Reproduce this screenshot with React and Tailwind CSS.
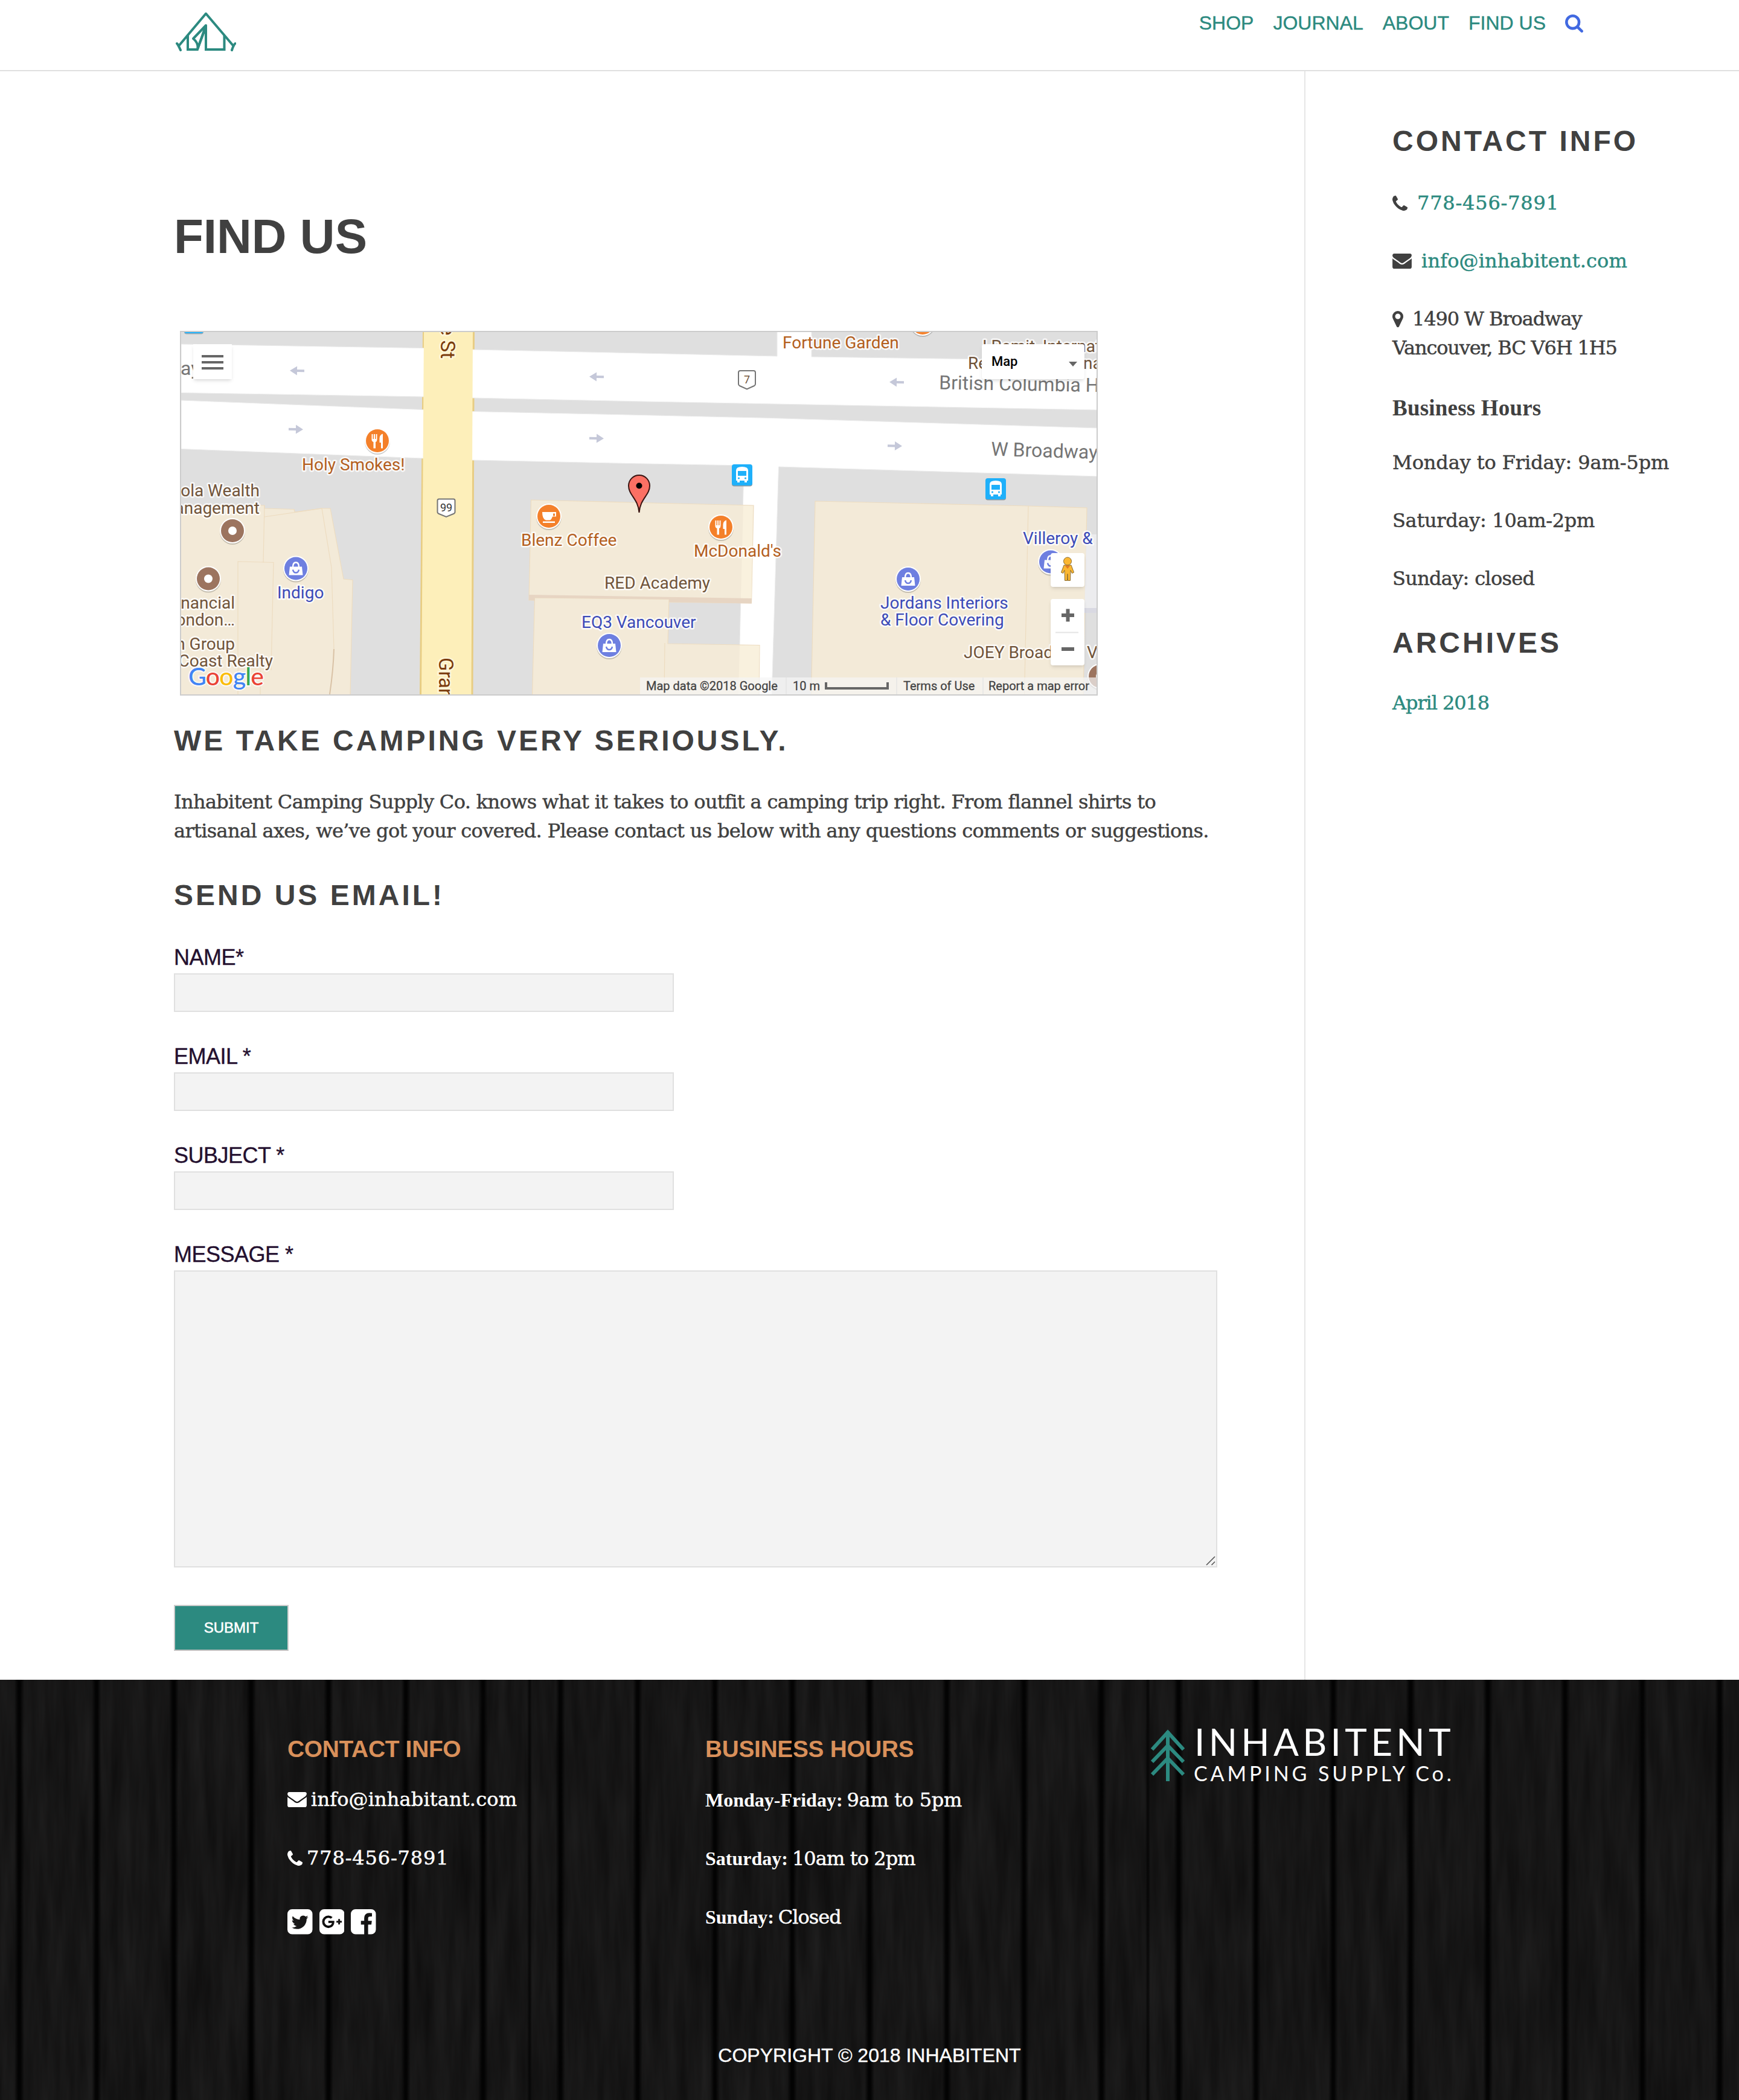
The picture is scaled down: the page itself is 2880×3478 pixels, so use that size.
import React from "react";

const ICONS = {
  search: {
    box: "64 128 1664 1664",
    d: "M1216 832q0-185-131.5-316.5t-316.5-131.5-316.5 131.5-131.5 316.5 131.5 316.5 316.5 131.5 316.5-131.5 131.5-316.5zm512 832q0 52-38 90t-90 38q-54 0-90-38l-343-342q-179 124-399 124-143 0-273.5-55.5t-225-150-150-225-55.5-273.5 55.5-273.5 150-225 225-150 273.5-55.5 273.5 55.5 225 150 150 225 55.5 273.5q0 220-124 399l343 343q37 37 37 90z",
  },
  phone: {
    box: "192 128 1408 1408",
    d: "M1600 1240q0 27-10 70.5t-21 68.5q-21 50-122 106-94 51-186 51-27 0-52.5-3.5t-57.5-12.5-47.5-14.5-55.5-20.5-49-18q-98-35-175-83-128-79-264.5-215.5t-215.5-264.5q-48-77-83-175-3-9-18-49t-20.5-55.5-14.5-47.5-12.5-57.5-3.5-52.5q0-92 51-186 56-101 106-122 25-11 68.5-21t70.5-10q14 0 21 3 18 6 53 76 11 19 30 54t35 63.5 31 53.5q3 4 17.5 25t21.5 35.5 7 28.5q0 20-28.5 50t-62 55-62 53-28.5 46q0 9 5 22.5t8.5 20.5 14 24 11.5 19q76 137 174 235t235 174q2 1 19 11.5t24 14 20.5 8.5 22.5 5q18 0 46-28.5t53-62 55-62 50-28.5q14 0 28.5 7t35.5 21.5 25 17.5q25 15 53.5 31t63.5 35 54 30q70 35 76 53 3 7 3 21z",
  },
  envelope: {
    box: "0 256 1792 1408",
    d: "M1792 710v794q0 66-47 113t-113 47h-1472q-66 0-113-47t-47-113v-794q44 49 101 87 362 246 497 345 57 42 92.5 65.5t94.5 48 110 24.5h2q51 0 110-24.5t94.5-48 92.5-65.5q170-123 498-345 57-39 100-87zm0-294q0 79-49 151t-122 123q-376 261-468 325-10 7-42.5 31t-54 38.5-52 32.5-57.5 27-50 9h-2q-23 0-50-9t-57.5-27-52-32.5-54-38.5-42.5-31q-91-64-262-182.5t-205-142.5q-62-42-117-115.5t-55-136.5q0-78 41.5-130t118.5-52h1472q65 0 112.5 47t47.5 113z",
  },
  marker: {
    box: "384 128 1024 1536",
    d: "M1152 640q0-106-75-181t-181-75-181 75-75 181 75 181 181 75 181-75 75-181zm256 0q0 109-33 179l-364 774q-16 33-47.5 52t-67.5 19-67.5-19-46.5-52l-365-774q-33-70-33-179 0-212 150-362t362-150 362 150 150 362z",
  },
  twitter: {
    box: "128 128 1536 1536",
    d: "M1408 610q-56 25-121 34 68-40 93-117-65 38-134 51-61-66-153-66-87 0-148.5 61.5t-61.5 148.5q0 29 5 48-129-7-242-65t-192-155q-29 50-29 106 0 114 91 175-47-1-100-26v2q0 75 50 133.5t123 72.5q-29 8-51 8-13 0-39-4 21 63 74.5 104t121.5 42q-116 90-261 90-26 0-50-3 148 94 322 94 112 0 210-35.5t168-95 120.5-137 75-162 24.5-168.5q0-18-1-27 63-45 105-109zm256-194v960q0 119-84.5 203.5t-203.5 84.5h-960q-119 0-203.5-84.5t-84.5-203.5v-960q0-119 84.5-203.5t203.5-84.5h960q119 0 203.5 84.5t84.5 203.5z",
  },
  google: {
    box: "128 128 1536 1536",
    d: "M1045 905q0-26-6-64h-362v132h217q-3 24-16.5 50t-37.5 53-66.5 44.5-96.5 17.5q-99 0-169-71t-70-171 70-171 169-71q92 0 153 59l104-101q-108-100-257-100-160 0-272 112.5t-112 271.5 112 271.5 272 112.5q165 0 266.5-105t101.5-270zm345 46h109v-110h-109v-110h-110v110h-110v110h110v110h110v-110zm274-535v960q0 119-84.5 203.5t-203.5 84.5h-960q-119 0-203.5-84.5t-84.5-203.5v-960q0-119 84.5-203.5t203.5-84.5h960q119 0 203.5 84.5t84.5 203.5z",
  },
  facebook: {
    box: "128 128 1536 1536",
    d: "M1376 128q119 0 203.5 84.5t84.5 203.5v960q0 119-84.5 203.5t-203.5 84.5h-188v-595h199l30-232h-229v-148q0-56 23.5-84t91.5-28l122-1v-207q-63-9-178-9-136 0-217.5 80t-81.5 226v171h-200v232h200v595h-532q-119 0-203.5-84.5t-84.5-203.5v-960q0-119 84.5-203.5t203.5-84.5h960z",
  },
};

function Icon({ name, className }) {
  const icon = ICONS[name];
  return (
    <svg viewBox={icon.box} className={className} fill="currentColor" aria-hidden="true">
      <path fillRule="evenodd" d={icon.d} />
    </svg>
  );
}

function TentLogo() {
  return (
    <svg viewBox="291 20 100 65" className="h-[65px] w-[100px]" fill="none" stroke="#2c8a80" strokeWidth="4">
      <g strokeLinecap="round" strokeLinejoin="round">
        <path d="M296 76 L341 22.500 L386.500 76" />
        <path d="M293 72 Q295 74 299 83" />
        <path d="M389.500 72 Q387 74 384 83" />
        <path d="M341 42 L320 64 Q328 70 327.500 80 L341 44" />
      </g>
      <path d="M311 59 V82 H327 L341 42" />
      <path d="M341 42 V82 H371.500 V59" />
    </svg>
  );
}

function Header() {
  return (
    <header className="flex h-[118px] items-start justify-between border-b-2 border-[#e0e0e0] pl-[291px] pr-[258px]">
      <div className="pt-5">
        <TentLogo />
      </div>
      <nav className="flex items-center gap-8 pt-[15px] text-[32px] leading-[48px] text-[#2c8a80]">
        <div className="-mt-px flex gap-8 [-webkit-text-stroke:0.4px]">
          <a>SHOP</a>
          <a>JOURNAL</a>
          <a>ABOUT</a>
          <a>FIND US</a>
        </div>
        <Icon name="search" className="h-[30px] w-[30px] text-[#4169e1]" />
      </nav>
    </header>
  );
}

const POI_LABELS = [
  [1296, 577, "Fortune Garden", "#b45f1e"],
  [500, 778.5, "Holy Smokes!", "#b45f1e"],
  [863, 903.5, "Blenz Coffee", "#b45f1e"],
  [1149, 922, "McDonald's", "#b45f1e"],
  [1001, 974.5, "RED Academy", "#71543a"],
  [963, 1039.5, "EQ3 Vancouver", "#3c4bb8"],
  [459, 991, "Indigo", "#3c4bb8"],
  [1458, 1007.5, "Jordans Interiors", "#3c4bb8"],
  [1458, 1036, "& Floor Covering", "#3c4bb8"],
  [1694, 900.5, "Villeroy &", "#3c4bb8"],
  [1596, 1090, "JOEY Broad", "#71543a"],
  [1800, 1090, "Van", "#71543a"],
  [1627, 583, "I Remit, Internat", "#71543a"],
  [1603, 611, "Re", "#71543a"],
  [1794, 611, "na", "#71543a"],
];

const EDGE_LABELS = [
  [430, 822, "ola Wealth"],
  [430, 850.5, "anagement"],
  [389, 1007.5, "nancial"],
  [389, 1036, "ondon…"],
  [389, 1075.5, "n Group"],
  [452, 1103.5, "Coast Realty"],
];

function Dot({ x, y, color, children }) {
  return (
    <g transform={`translate(${x} ${y})`}>
      <circle cy="2" r="21" fill="#00000030" />
      <circle r="21" fill="#fff" />
      <circle r="19" fill={color} />
      {children}
    </g>
  );
}

const Fork = () => (
  <g fill="#fff">
    <path d="M-9.500-11h2v8h1.500v-8h2v8h1.500v-8h2v9q0 3-2.500 4v10.500h-3.500V2q-3-1-3-4z" />
    <path d="M9-11.500v24h-3V3h-2.500v-7q0-6 5.500-7.500z" />
  </g>
);
const Cup = () => (
  <g>
    <path d="M-11-7h23v7.500h-6q-2 6-5 6h-6q-6-2-6-13.500z" fill="#fff" />
    <rect x="7" y="-4.500" width="3" height="4" fill="#f4802a" />
    <rect x="-10" y="8.500" width="20" height="2.500" fill="#fff" />
  </g>
);
const Bag = () => (
  <g>
    <path d="M-10-3h20l1.500 14h-23z" fill="#fff" />
    <path d="M-5-2q0-8 5-8t5 8" fill="none" stroke="#fff" strokeWidth="2.500" />
    <path d="M-5 2q1 5 5 5t5-5" fill="none" stroke="#6e7fe0" strokeWidth="2.500" />
  </g>
);
const Hole = () => <circle r="7" fill="#fff" />;

function Bus({ x, y }) {
  return (
    <g transform={`translate(${x} ${y})`}>
      <rect y="1.500" width="34" height="35" rx="4" fill="#8b9aa3" />
      <rect width="34" height="35" rx="4" fill="#1fb0fa" />
      <path d="M7 27V10q0-6 10-6t10 6v17h-2v3h-4v-3h-8v3h-4v-3z" fill="#fff" />
      <rect x="10" y="11" width="14" height="8" fill="#1fb0fa" />
      <circle cx="11.500" cy="23" r="1.600" fill="#1fb0fa" />
      <circle cx="22.500" cy="23" r="1.600" fill="#1fb0fa" />
    </g>
  );
}

function Arrow({ x, y, flip }) {
  return (
    <path
      transform={`translate(${x} ${y}) rotate(${flip ? 181 : 1})`}
      d="M-12-2H0V-7.500L12 0 0 7.500V2H-12z"
      fill="#c5c8d9"
    />
  );
}

function MapDrawing() {
  return (
    <svg viewBox="300 550 1516 600" className="block h-[600px] w-[1516px]" fontFamily="Roboto, sans-serif">
      <rect x="300" y="550" width="1516" height="600" fill="#dfdfdf" />
      {/* avenue kerbs */}
      <path d="M700 550H786L783.500 1150H695z" fill="#e8cd83" />
      {/* streets */}
      <g fill="#fff" stroke="#ececec" strokeWidth="1">
        <path d="M300 570 700 576.500 782 579 1040 584.500 1287 590V540H1344V591L1601 594.500 1820 600V679L1040 664.500 782 659 700 657 300 650.500z" />
        <path d="M300 663 700 678.500 782 681.500 1040 687 1280 692.500 1820 709V789L1289.500 773 1278 1155H1223L1232 771 1040 767.500 782 762 700 759 300 743.500z" />
      </g>
      <path d="M702 550H783L780.500 1150H698z" fill="#fdefba" />
      {/* buildings */}
      <g fill="#f3ead8" stroke="#eddcc0" strokeWidth="1.200">
        <path d="M298 837H438V842L487 843.500 488 848 533 842H547L569 959 584 960.500 580 1152H298z" />
        <path d="M438 837 436 932M394 1152V930L453 931.500 449 1110M394 1108H449M431 1110V1152M438 856 533 842 549 940 553 1075" fill="none" />
        <path d="M553 1075Q552 1110 546 1150" fill="none" stroke="#d9c2a6" strokeWidth="2" />
        <path d="M879.500 828 1040 832 1248 837 1244.500 999 876 994z" />
        <path d="M885.500 990 1108 992.500 1106 1066 1258 1068.500 1257 1152H881.500z" />
        <path d="M1101 1065 1100 1152" />
        <path d="M1350 830 1703 838 1800 841 1794 1152H1343.500z" />
        <path d="M1703 838 1696.500 1152" />
      </g>
      <path d="M1231 837.500 1247 838 1244.500 991H1227z M1225 1069H1257.500L1256.500 1150H1223z" fill="#f9f1de" />
      <path d="M876 985 1245 991 1244.500 999.500 1108 997V992.500L885.500 990V994.500L876 994z" fill="#e7d5c3" />
      <path d="M1799 885H1816V1007H1796z" fill="#ececee" />
      <path d="M1796 1007H1816V1015H1796z" fill="#d9d9e2" />

      <Arrow x={492} y={614} flip />
      <Arrow x={988} y={624} flip />
      <Arrow x={1485} y={633} flip />
      <Arrow x={490} y={711} />
      <Arrow x={988} y={726} />
      <Arrow x={1482} y={738.5} />

      {/* street names */}
      <g fontSize="32" fill="#757575">
        <text x="299" y="620.500">ay</text>
        <text transform="translate(1555 644.500) rotate(1)">British Columbia H</text>
        <text transform="translate(1641 754.500) rotate(1.800)">W Broadway</text>
      </g>
      <g fontSize="33" fill="#7a3c0c" stroke="#fff6d8" strokeWidth="5" paintOrder="stroke">
        <text transform="translate(730 594) rotate(90)" textAnchor="end">e St</text>
        <text transform="translate(727 1089) rotate(90)">Gran</text>
      </g>

      {/* route shields */}
      <g fill="#fff" stroke="#757575" strokeWidth="2" textAnchor="middle">
        <path d="M727 826.500H751Q753.500 826.500 753.500 829V848Q753.500 850 751 851L739 856 727 851Q724.500 850 724.500 848V829Q724.500 826.500 727 826.500z" />
        <path d="M1226 614H1248Q1251 614 1251 617V636Q1251 638 1249 639L1237 644.500 1225 639Q1223 638 1223 636V617Q1223 614 1226 614z" />
        <text x="739" y="847" fontSize="18" fill="#333" stroke="none">99</text>
        <text x="1237" y="635" fontSize="18" fill="#71543a" stroke="none">7</text>
      </g>

      <rect x="305" y="520" width="32" height="33.500" rx="4" fill="#a5abaf" />
      <rect x="305" y="520" width="32" height="32" rx="4" fill="#1fb0fa" />
      <Bus x={1212} y={769} />
      <Bus x={1632} y={792} />
      <Dot x={1528} y={535} color="#f4802a" />
      <Dot x={625} y={730} color="#f4802a"><Fork /></Dot>
      <Dot x={909} y={855} color="#f4802a"><Cup /></Dot>
      <Dot x={1194} y={873} color="#f4802a"><Fork /></Dot>
      <Dot x={385} y={879} color="#9c745f"><Hole /></Dot>
      <Dot x={345} y={958.5} color="#9c745f"><Hole /></Dot>
      <Dot x={1822} y={1120} color="#9c745f"><Hole /></Dot>
      <Dot x={490} y={941.5} color="#6e7fe0"><Bag /></Dot>
      <Dot x={1009} y={1069} color="#6e7fe0"><Bag /></Dot>
      <Dot x={1504} y={959} color="#6e7fe0"><Bag /></Dot>
      <Dot x={1740} y={930.5} color="#6e7fe0"><Bag /></Dot>

      <g fontSize="28" stroke="#ffffffcc" strokeWidth="5" strokeLinejoin="round" paintOrder="stroke">
        {POI_LABELS.map(([x, y, label, color]) => (
          <text key={label} x={x} y={y} fill={color}>{label}</text>
        ))}
        {EDGE_LABELS.map(([x, y, label]) => (
          <text key={label} x={x} y={y} fill="#71543a" textAnchor="end">{label}</text>
        ))}
      </g>

      {/* location pin */}
      <path
        d="M1058.500 849C1057 826 1041 820 1041 804.500A17.500 17.500 0 0 1 1076 804.500C1076 820 1060 826 1058.500 849z"
        fill="#fb7064"
        stroke="#3a1512"
        strokeWidth="2"
      />
      <circle cx="1058.500" cy="804.500" r="5" fill="#000" />

      <text
        x="312"
        y="1135"
        fontFamily="Lato, sans-serif"
        fontSize="41"
        fontWeight="500"
        textLength="125"
        stroke="#ffffffcc"
        strokeWidth="4"
        paintOrder="stroke"
      >
        <tspan fill="#4285f4">G</tspan>
        <tspan fill="#ea4335">o</tspan>
        <tspan fill="#fbbc05">o</tspan>
        <tspan fill="#4285f4">g</tspan>
        <tspan fill="#34a853">l</tspan>
        <tspan fill="#ea4335">e</tspan>
      </text>
    </svg>
  );
}

function Pegman() {
  return (
    <svg viewBox="0 0 24 40" className="h-[40px] w-[24px]" stroke="#8a6a2c" strokeWidth="1">
      <path d="M6 14h12l4.500 12-3 1.500-2.500-5-.5 17h-4l-.5-11-.5 11h-4L7 22.500l-2.500 5-3-1.500z" fill="#fbb732" />
      <path d="M7.500 14.500h9L12 20z" fill="#e27b26" stroke="none" />
      <circle cx="12" cy="7.500" r="6.500" fill="#fbb732" />
    </svg>
  );
}

function MapPanel() {
  return (
    <div className="relative ml-[10px] mt-[108px] h-[604px] w-[1520px] overflow-hidden border-2 border-[#ccc]">
      <MapDrawing />
      <div className="absolute left-[20px] top-[20px] flex h-[58px] w-[64px] flex-col items-center justify-center gap-[6px] bg-white pt-px shadow-md">
        <span className="h-1 w-9 bg-[#666]" />
        <span className="h-1 w-9 bg-[#666]" />
        <span className="h-1 w-9 bg-[#666]" />
      </div>
      <div className="absolute left-[1326px] top-[20px] flex h-[58px] w-[170px] items-center justify-between rounded-[4px] bg-white pl-4 pr-3 font-[Roboto] text-[22px] font-medium text-black shadow-md">
        <span className="-mt-px">Map</span>
        <svg viewBox="0 0 14 8" className="mt-2 h-2 w-[14px]"><path d="M0 0H14L7 8z" fill="#666" /></svg>
      </div>
      <div className="absolute left-[1440px] top-[366px] flex h-[56px] w-[56px] items-center justify-center rounded-[4px] bg-white pb-1 shadow-md">
        <Pegman />
      </div>
      <div className="absolute left-[1440px] top-[442px] flex h-[110px] w-[56px] items-center justify-center rounded-[4px] bg-white shadow-md">
        <svg viewBox="0 0 56 110" className="h-[110px] w-[56px]" fill="#666">
          <path d="M18 24H39V30H18zM25.500 16.500H31.500V37.500H25.500zM18 80H39V86H18z" />
          <path d="M8 54.500H46V56.500H8z" fill="#e4e4e4" />
        </svg>
      </div>
      <div className="absolute bottom-0 left-[760px] flex h-[28px] w-[756px] items-center bg-[#f5f5f5]/70 font-[Roboto] text-[20px] leading-[28px] whitespace-nowrap text-[#444] [-webkit-text-stroke:0.3px]">
        <span className="w-[241px] pl-[10px]">Map data ©2018 Google</span>
        <span className="flex w-[183px] items-center gap-2 border-l-2 border-[#e4e4e4]/70 pl-[10px]">
          10 m
          <span className="h-3 w-[106px] border-4 border-t-0 border-[#666]" />
        </span>
        <span className="w-[143px] border-l-2 border-[#e4e4e4]/70 pl-[10px]">Terms of Use</span>
        <span className="border-l-2 border-[#e4e4e4]/70 pl-[8px]">Report a map error</span>
      </div>
    </div>
  );
}

function Label({ children }) {
  return (
    <label className="block h-[50px] text-[36px] leading-[48px] tracking-[-0.5px] text-[#24102f] [-webkit-text-stroke:0.4px]">
      {children}
    </label>
  );
}

function Field({ label }) {
  return (
    <div className="mb-[50px]">
      <Label>{label}</Label>
      <input className="block h-[64px] w-[828px] border-2 border-[#e0e0e0] bg-[#f3f3f3]" />
    </div>
  );
}

function Content() {
  return (
    <main className="w-[2160px] pl-[288px] font-['Liberation_Sans']">
      <h1 className="mt-[226px] text-[80px] font-bold leading-[96px]">FIND US</h1>
      <MapPanel />
      <h2 className="mt-[51px] text-[48px] font-bold leading-[48px] tracking-[4px]">WE TAKE CAMPING VERY SERIOUSLY.</h2>
      <p className="mt-[53px] font-['DejaVu_Serif'] text-[32px] leading-[48px] tracking-[-0.66px] whitespace-nowrap [-webkit-text-stroke:0.5px]">
        Inhabitent Camping Supply Co. knows what it takes to outfit a camping trip right. From flannel shirts to
        <br />
        artisanal axes, we’ve got your covered. Please contact us below with any questions comments or suggestions.
      </p>
      <h2 className="mb-[55px] mt-[59px] text-[48px] font-bold leading-[48px] tracking-[4px]">SEND US EMAIL!</h2>
      <Field label="NAME*" />
      <Field label="EMAIL *" />
      <Field label="SUBJECT *" />
      <Label>MESSAGE *</Label>
      <div className="flex h-[492px] w-[1728px] items-end justify-end border-2 border-[#e0e0e0] bg-[#f3f3f3] pb-px pr-px">
        <svg viewBox="0 0 16 16" className="h-4 w-4" stroke="#555" strokeWidth="1.600">
          <path d="M1 15L15 1M9.500 15L15 9.500" />
        </svg>
      </div>
      <button className="mt-[62px] block h-[76px] w-[190px] border-2 border-[#ccc] border-b-[#bbb] bg-[#2c8a80] text-[24px] leading-[72px] text-white [-webkit-text-stroke:0.6px]">
        SUBMIT
      </button>
    </main>
  );
}

function Sidebar() {
  return (
    <aside className="w-[720px] border-l-2 border-[#e6e6e6] pl-[144px] font-['DejaVu_Serif'] text-[32px] leading-[48px] whitespace-nowrap">
      <h2 className="mt-[92px] font-['Liberation_Sans'] text-[48px] font-bold leading-[48px] tracking-[4px]">CONTACT INFO</h2>
      <div className="[-webkit-text-stroke:0.5px]">
        <p className="mt-[54px] flex items-center gap-4">
          <Icon name="phone" className="h-[25px] w-[25px]" />
          <a className="tracking-[0.8px] text-[#2c8a80]">778-456-7891</a>
        </p>
        <p className="mt-12 flex items-center gap-4">
          <Icon name="envelope" className="h-[25px] w-[32px]" />
          <a className="tracking-[0.15px] text-[#2c8a80]">info@inhabitent.com</a>
        </p>
        <p className="mt-12 flex items-center gap-[15px] tracking-[-1.1px]">
          <Icon name="marker" className="h-[27px] w-[18px]" />
          1490 W Broadway
        </p>
        <p className="tracking-[-1.14px]">Vancouver, BC V6H 1H5</p>
      </div>
      <p className="mt-[52px] font-['Liberation_Serif'] text-[37px] font-bold tracking-[0.2px]">Business Hours</p>
      <div className="mt-[42px] [-webkit-text-stroke:0.5px]">
        <p className="tracking-[-0.1px]">Monday to Friday: 9am-5pm</p>
        <p className="mt-12 tracking-[-0.3px]">Saturday: 10am-2pm</p>
        <p className="mt-12 tracking-[-0.7px]">Sunday: closed</p>
      </div>
      <h2 className="mt-[59px] font-['Liberation_Sans'] text-[48px] font-bold leading-[48px] tracking-[4px]">ARCHIVES</h2>
      <p className="mt-[51px] tracking-[-1.1px] text-[#2c8a80] [-webkit-text-stroke:0.5px]">April 2018</p>
    </aside>
  );
}

const GAPS = Array.from({ length: 23 }, (_, i) => 32 + i * 128);

function WoodTexture() {
  return (
    <svg viewBox="0 0 2880 696" className="absolute inset-0 h-[696px] w-[2880px]" aria-hidden="true">
      <defs>
        <filter id="grain" x="0" y="0" width="100%" height="100%" colorInterpolationFilters="sRGB">
          <feTurbulence type="fractalNoise" baseFrequency="0.05 0.005" numOctaves="4" seed="7" />
          <feColorMatrix values="0.075 0 0 0 0.05  0.075 0 0 0 0.048  0.075 0 0 0 0.048  0 0 0 0 1" />
        </filter>
        <linearGradient id="gap">
          <stop offset="0" stopColor="#000" stopOpacity="0" />
          <stop offset="0.400" stopColor="#000" stopOpacity="0.850" />
          <stop offset="0.600" stopColor="#000" stopOpacity="0.850" />
          <stop offset="1" stopColor="#000" stopOpacity="0" />
        </linearGradient>
      </defs>
      <rect width="2880" height="696" filter="url(#grain)" />
      {GAPS.map((x) => (
        <rect key={x} x={x - 8} width="16" height="696" fill="url(#gap)" />
      ))}
      {[877, 1901].map((x) => (
        <rect key={x} x={x - 4} width="8" height="696" fill="url(#gap)" opacity="0.700" />
      ))}
    </svg>
  );
}

function FooterLogo() {
  return (
    <div className="flex gap-[15px] pt-[82px]">
      <svg viewBox="0 0 56 86" className="h-[86px] w-[56px]" fill="none" stroke="#2c8a80" strokeWidth="6">
        <path d="M28 3V86" />
        <path d="M2 33.500L28 5L54 33.500M2 54L28 27L54 54M2 75L28 48L54 75" />
      </svg>
      <div className="-mt-[10px] font-[Lato] whitespace-nowrap">
        <div className="pl-px text-[62px] leading-[60px] tracking-[6.3px]">INHABITENT</div>
        <div className="mt-[3px] text-[34px] leading-[40px] tracking-[4.9px]">CAMPING SUPPLY Co.</div>
      </div>
    </div>
  );
}

function HoursRow({ day, className, children }) {
  return (
    <p className="mb-[49px] flex gap-[7px]">
      <b className="font-['Liberation_Serif'] text-[32px]">{day}</b>
      <span className="[-webkit-text-stroke:0.5px]">
        <span className={className}>{children}</span>
      </span>
    </p>
  );
}

function Footer() {
  return (
    <footer className="relative h-[696px] text-white">
      <WoodTexture />
      <div className="relative flex h-full flex-col justify-between pb-[50px]">
        <div className="grid grid-cols-[692px_738px_1fr] pl-[476px] font-['DejaVu_Serif'] text-[32px] leading-[48px] whitespace-nowrap">
          <section className="pt-[91px]">
            <h3 className="font-['Liberation_Sans'] text-[38.9px] font-bold leading-[48px] tracking-[-0.3px] text-[#d9905a]">CONTACT INFO</h3>
            <p className="mt-[35px] flex items-center gap-[7px] tracking-[0.15px] [-webkit-text-stroke:0.5px]">
              <Icon name="envelope" className="h-[25px] w-[32px]" />
              info@inhabitant.com
            </p>
            <p className="mt-[49px] flex items-center gap-[7px] tracking-[0.85px] [-webkit-text-stroke:0.5px]">
              <Icon name="phone" className="h-[25px] w-[25px]" />
              778-456-7891
            </p>
            <div className="mt-[61px] flex gap-[11px]">
              <Icon name="twitter" className="h-[41.500px] w-[41.500px]" />
              <Icon name="google" className="h-[41.500px] w-[41.500px]" />
              <Icon name="facebook" className="h-[41.500px] w-[41.500px]" />
            </div>
          </section>
          <section className="pt-[91px]">
            <h3 className="mb-9 font-['Liberation_Sans'] text-[38.7px] font-bold leading-[48px] tracking-[-0.2px] text-[#d9905a]">BUSINESS HOURS</h3>
            <HoursRow day="Monday-Friday:" className="tracking-[-0.3px]">9am to 5pm</HoursRow>
            <HoursRow day="Saturday:" className="tracking-[-0.9px]">10am to 2pm</HoursRow>
            <HoursRow day="Sunday:" className="tracking-[-1px]">Closed</HoursRow>
          </section>
          <FooterLogo />
        </div>
        <p className="text-center text-[32px] leading-[48px] [-webkit-text-stroke:0.4px]">COPYRIGHT © 2018 INHABITENT</p>
      </div>
    </footer>
  );
}

export default function App() {
  return (
    <div className="w-[2880px] bg-white font-['Liberation_Sans'] text-[#404040]">
      <Header />
      <div className="flex h-[2664px]">
        <Content />
        <Sidebar />
      </div>
      <Footer />
    </div>
  );
}
